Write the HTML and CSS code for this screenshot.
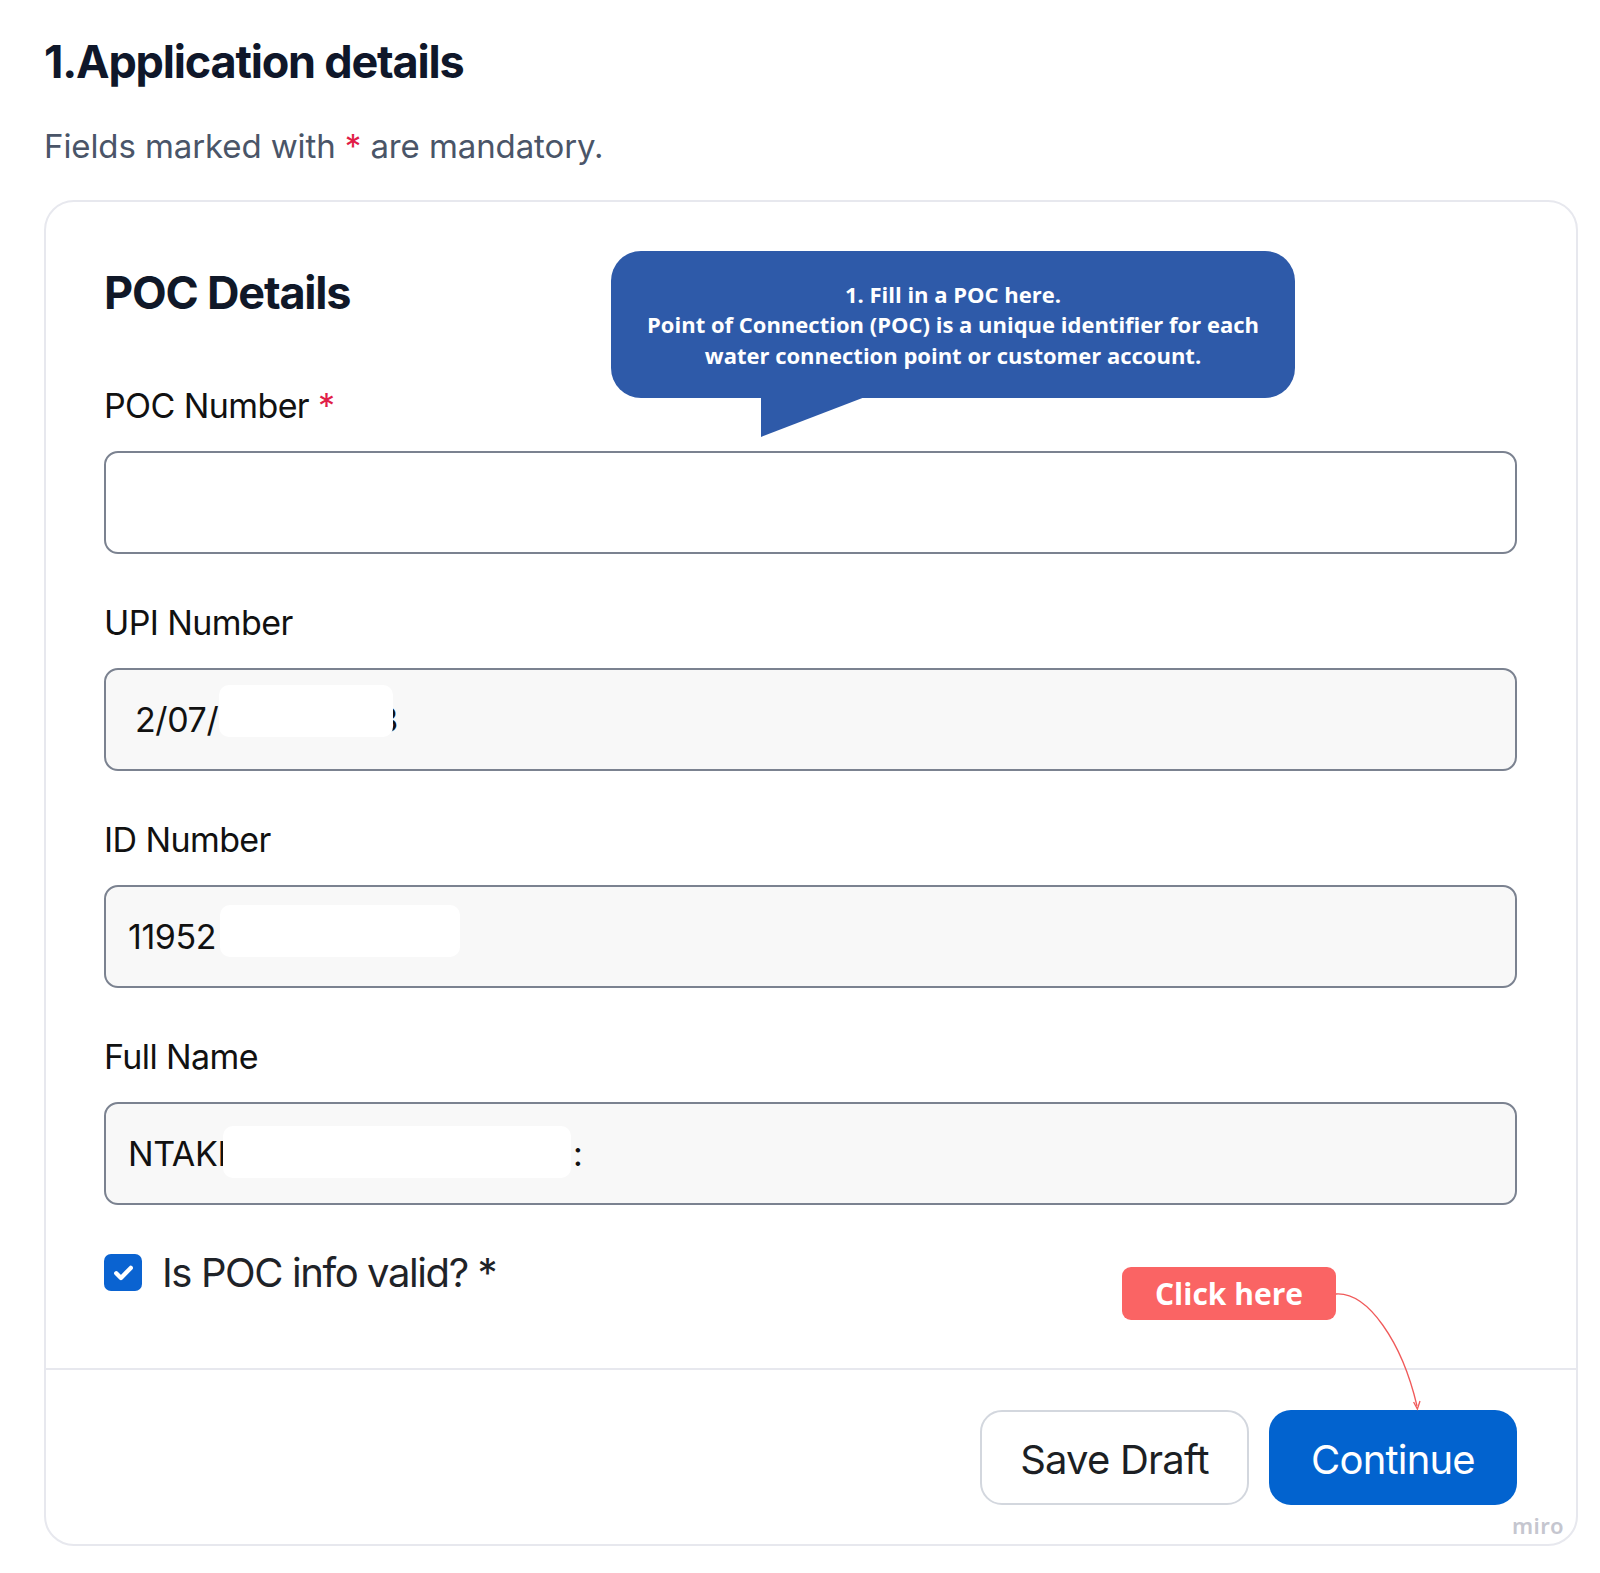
FILE: index.html
```html
<!DOCTYPE html>
<html lang="en">
<head>
<meta charset="utf-8">
<title>Application details</title>
<link rel="stylesheet" href="styles.css">
</head>
<body>
<main class="page">
  <h1 class="title">1.Application details</h1>
  <p class="subtitle">Fields marked with <span class="req">*</span> are mandatory.</p>

  <section class="card">
    <div class="card-body">
      <h2 class="section-title">POC Details</h2>

      <div class="field">
        <label class="label">POC Number <span class="req">*</span></label>
        <div class="input input-empty"></div>
      </div>

      <div class="field">
        <label class="label">UPI Number</label>
        <div class="input input-disabled input-upi">
          <span class="value">2/07/</span><span class="redact redact-upi"></span><span class="value">3</span>
        </div>
      </div>

      <div class="field">
        <label class="label">ID Number</label>
        <div class="input input-disabled input-id">
          <span class="value">11952</span><span class="redact redact-id"></span>
        </div>
      </div>

      <div class="field">
        <label class="label">Full Name</label>
        <div class="input input-disabled input-name">
          <span class="value">NTAKI</span><span class="redact redact-name"></span><span class="value">:</span>
        </div>
      </div>

      <div class="check-row">
        <span class="checkbox">
          <svg viewBox="0 0 24 24" width="29" height="29"><path d="M6 12.6l3.9 3.9L18 8.2" fill="none" stroke="#fff" stroke-width="3.6" stroke-linecap="round" stroke-linejoin="round"/></svg>
        </span>
        <span class="check-label">Is POC info valid? *</span>
      </div>
    </div>

    <div class="card-footer">
      <button class="btn btn-secondary">Save Draft</button>
      <button class="btn btn-primary">Continue</button>
    </div>

    <div class="tooltip">
      <p>1. Fill in a POC here.<br>Point of Connection (POC) is a unique identifier for each<br>water connection point or customer account.</p>
    </div>
    <svg class="tooltip-tail" width="110" height="42" viewBox="0 0 110 42"><path d="M0 0 L0 40 L104 0 Z" fill="#2e5aa9"/></svg>

    <div class="click-here">Click here</div>
    <svg class="arrow" width="1534" height="1346" viewBox="0 0 1534 1346">
      <path d="M1290 1092 C1322 1090, 1356 1140, 1371 1204" fill="none" stroke="#f05a5a" stroke-width="1.3"/>
      <path d="M1367.6 1200 L1371.4 1207 L1374 1199" fill="none" stroke="#f05a5a" stroke-width="1.3"/>
    </svg>
    <span class="miro">miro</span>
  </section>
</main>
</body>
</html>
```
FILE: styles.css
```css
* { box-sizing: border-box; }
html, body { margin: 0; padding: 0; background: #fff; }
body { font-family: Inter, "Noto Sans", sans-serif; color: #111; }

.page { padding: 34px 22px 27px 44px; }

.title {
  margin: 0;
  font-size: 45px;
  line-height: 56px;
  font-weight: 700;
  letter-spacing: -1.2px;
  color: #0f172a;
}

.subtitle {
  margin: 36px 0 0 0;
  font-size: 33px;
  line-height: 40px;
  font-weight: 400;
  letter-spacing: -0.1px;
  color: #4a5568;
}

.req { color: #e11d48; }

.card {
  position: relative;
  margin-top: 34px;
  width: 1534px;
  height: 1346px;
  border: 2px solid #e7e8ee;
  border-radius: 30px;
  display: flex;
  flex-direction: column;
}

.card-body {
  flex: 1;
  padding: 64px 59px 0 58px;
}

.section-title {
  margin: 0 0 66px 0;
  font-size: 45px;
  line-height: 54px;
  font-weight: 700;
  letter-spacing: -1.2px;
  color: #101828;
}

.field { margin-bottom: 49px; }

.label {
  display: block;
  font-size: 34px;
  line-height: 40px;
  letter-spacing: -0.6px;
  color: #111;
  margin-bottom: 25px;
}

.input {
  height: 103px;
  border: 2px solid #7b8290;
  border-radius: 14px;
  display: flex;
  align-items: center;
  font-size: 34px;
  letter-spacing: -0.4px;
  color: #111;
}
.input-empty { background: #fff; }
.input-disabled { background: #f8f8f8; }
.input-upi { padding-left: 29px; }
.input-id { padding-left: 22px; }
.input-name { padding-left: 22px; }

.value { white-space: nowrap; }

.redact {
  position: relative;
  z-index: 1;
  display: inline-block;
  align-self: flex-start;
  height: 52px;
  background: #fff;
  border-radius: 10px;
}
.redact-upi { width: 174px; margin: 15px -16px 0 1px; }
.redact-id { width: 240px; margin: 18px 0 0 4px; }
.redact-name { width: 348px; margin: 22px 2px 0 -3px; }

.check-row {
  display: flex;
  align-items: center;
  gap: 20px;
}
.checkbox {
  width: 38px;
  height: 37px;
  border-radius: 7px;
  background: #0a63d1;
  display: flex;
  align-items: center;
  justify-content: center;
}
.check-label {
  font-size: 40px;
  line-height: 37px;
  letter-spacing: -1.4px;
  color: #1f2328;
}

.card-footer {
  border-top: 2px solid #e7e8ee;
  height: 176px;
  display: flex;
  justify-content: flex-end;
  align-items: center;
  gap: 20px;
  padding: 0 59px 0 0;
}

.btn {
  height: 95px;
  border-radius: 22px;
  font-family: Inter, "Noto Sans", sans-serif;
  font-size: 40px;
  letter-spacing: -0.8px;
  padding-top: 6px;
  cursor: pointer;
}
.btn-secondary {
  width: 269px;
  background: #fff;
  border: 2px solid #d3d7de;
  color: #1c1f24;
}
.btn-primary {
  width: 248px;
  background: #0263cf;
  border: none;
  color: #fff;
}

.tooltip {
  position: absolute;
  left: 565px;
  top: 49px;
  width: 684px;
  height: 147px;
  background: #2e5aa9;
  border-radius: 30px;
  display: flex;
  align-items: center;
  justify-content: center;
}
.tooltip p {
  margin: 0;
  font-family: "Open Sans", sans-serif;
  font-weight: 700;
  font-size: 22px;
  line-height: 30.5px;
  color: #fff;
  text-align: center;
}
.tooltip-tail {
  position: absolute;
  left: 715px;
  top: 195px;
}

.click-here {
  position: absolute;
  left: 1076px;
  top: 1065px;
  width: 214px;
  height: 53px;
  background: #fa6464;
  border-radius: 9px;
  color: #fff;
  font-family: "Open Sans", sans-serif;
  font-weight: 700;
  font-size: 30px;
  display: flex;
  align-items: center;
  justify-content: center;
}

.arrow {
  position: absolute;
  left: 0;
  top: 0;
  pointer-events: none;
}

.miro {
  position: absolute;
  right: 12px;
  bottom: 4px;
  font-family: "Noto Sans", sans-serif;
  font-size: 22px;
  font-weight: 600;
  color: #c5c6cf;
  letter-spacing: 0.5px;
}
```
